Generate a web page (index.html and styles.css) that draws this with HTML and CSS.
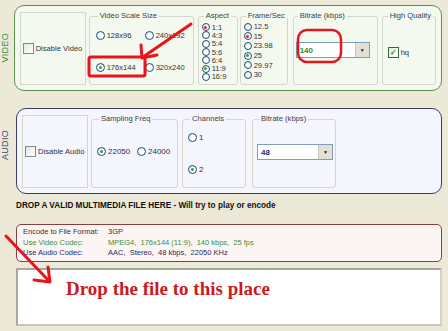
FILE: index.html
```html
<!DOCTYPE html>
<html lang="en">
<head>
    <meta charset="UTF-8">
    <title>Encoder</title>
    <link rel="stylesheet" href="styles.css">
</head>
<body>
    <div class="page">
        <div class="section video">
            <div class="side">VIDEO</div>
            <div class="panel">
                <label class="disable"><span class="check"></span>Disable Video</label>

                <fieldset class="group scale">
                    <legend>Video Scale Size</legend>
                    <div class="grid2">
                        <span class="opt"><span class="radio"></span>128x96</span>
                        <span class="opt"><span class="radio"></span>240x192</span>
                        <span class="opt"><span class="radio on"></span>176x144</span>
                        <span class="opt"><span class="radio"></span>320x240</span>
                    </div>
                </fieldset>

                <fieldset class="group aspect">
                    <legend>Aspect</legend>
                    <div class="list">
                        <span class="opt"><span class="radio small red"></span>1:1</span>
                        <span class="opt"><span class="radio small"></span>4:3</span>
                        <span class="opt"><span class="radio small"></span>5:4</span>
                        <span class="opt"><span class="radio small"></span>5:6</span>
                        <span class="opt"><span class="radio small"></span>6:4</span>
                        <span class="opt"><span class="radio small on"></span>11:9</span>
                        <span class="opt"><span class="radio small"></span>16:9</span>
                    </div>
                </fieldset>

                <fieldset class="group fps">
                    <legend>Frame/Sec</legend>
                    <div class="list">
                        <span class="opt"><span class="radio small"></span>12.5</span>
                        <span class="opt"><span class="radio small red"></span>15</span>
                        <span class="opt"><span class="radio small"></span>23.98</span>
                        <span class="opt"><span class="radio small on"></span>25</span>
                        <span class="opt"><span class="radio small"></span>29.97</span>
                        <span class="opt"><span class="radio small"></span>30</span>
                    </div>
                </fieldset>

                <fieldset class="group vbitrate">
                    <legend>Bitrate (kbps)</legend>
                    <div class="select green"><span class="val">140</span><span class="drop">&#9660;</span></div>
                </fieldset>

                <fieldset class="group hq">
                    <legend>High Quality</legend>
                    <label class="hqbox"><span class="check on">&#10003;</span>hq</label>
                </fieldset>
            </div>
        </div>

        <div class="section audio">
            <div class="side">AUDIO</div>
            <div class="panel">
                <label class="disable"><span class="check"></span>Disable Audio</label>

                <fieldset class="group freq">
                    <legend>Sampling Freq</legend>
                    <div class="row">
                        <span class="opt w40"><span class="radio on"></span>22050</span>
                        <span class="opt"><span class="radio"></span>24000</span>
                    </div>
                </fieldset>

                <fieldset class="group channels">
                    <legend>Channels</legend>
                    <div class="col">
                        <span class="opt"><span class="radio"></span>1</span>
                        <span class="opt"><span class="radio on"></span>2</span>
                    </div>
                </fieldset>

                <fieldset class="group abitrate">
                    <legend>Bitrate (kbps)</legend>
                    <div class="select navy"><span class="val">48</span><span class="drop">&#9660;</span></div>
                </fieldset>
            </div>
        </div>

        <p class="hint">DROP A VALID MULTIMEDIA FILE HERE - Will try to play or encode</p>

        <div class="info">
            <div class="line"><span class="key">Encode to File Format:</span><span>3GP</span></div>
            <div class="line green"><span class="key">Use Video Codec:</span><span>MPEG4, &nbsp;176x144 (11:9), &nbsp;140 kbps, &nbsp;25 fps</span></div>
            <div class="line navy"><span class="key">Use Audio Codec:</span><span>AAC, &nbsp;Stereo, &nbsp;48 kbps, &nbsp;22050 KHz</span></div>
        </div>

        <div class="dropzone">Drop the file to this place</div>
    </div>

    <svg class="marks" width="448" height="331" viewBox="0 0 448 331">
        <g fill="none" stroke="#e8141c" stroke-linecap="round" stroke-linejoin="round">
            <path d="M191 24 L143 57" stroke-width="3"/>
            <path d="M141 45 L142 58 L157 55" stroke-width="3"/>
            <rect x="89" y="57" width="56" height="19" rx="2" stroke-width="3"/>
            <rect x="298" y="30" width="43" height="32" rx="9" stroke-width="2.5"/>
            <path d="M6 236 L49 281" stroke-width="3"/>
            <path d="M48 267 L50 282 L34 280" stroke-width="3"/>
        </g>
    </svg>
</body>
</html>
```

FILE: styles.css
```css
body {
    margin: 0;
    background-color: #ece9d8;
    font-family: "Liberation Sans", Arial, sans-serif;
    font-size: 7.6px;
    color: #333;
    position: relative;
    width: 448px;
    height: 331px;
    overflow: hidden;
}

.page {
    padding: 5px 6px 0 0;
}

.section {
    display: flex;
    align-items: center;
    height: 86px;
}

.section.audio {
    margin-top: 17px;
}

.side {
    width: 16px;
    writing-mode: vertical-rl;
    transform: rotate(180deg);
    text-align: center;
    font-size: 9px;
    letter-spacing: 0.3px;
}

.video .side {
    color: #3f8f3f;
}

.audio .side {
    color: #46466e;
    margin-top: -12px;
}

.panel {
    flex: 1;
    height: 86px;
    box-sizing: border-box;
    display: flex;
    padding: 6px 5px 5px 5px;
    border-radius: 10px;
}

.video .panel {
    border: 1px solid #5c8f4c;
    background-color: #f4f9f0;
}

.audio .panel {
    border: 1px solid #3c3c6c;
    background-color: #f5f5fd;
}

.disable {
    width: 66px;
    box-sizing: border-box;
    border: 1px solid #d8d6c8;
    display: flex;
    align-items: center;
    padding-left: 2px;
    margin-right: 3px;
}

.check {
    width: 9px;
    height: 9px;
    border: 1px solid #7f8a8f;
    background: linear-gradient(135deg, #e6e6e0, #fff);
    margin-right: 2px;
    flex: none;
    display: inline-flex;
    align-items: center;
    justify-content: center;
    font-size: 8px;
    line-height: 1;
}

.check.on {
    border-color: #2d6b3c;
    color: #2a8a2a;
    font-weight: bold;
}

.group {
    margin: 0;
    padding: 0 4px;
    border: 1px solid #d8d6c8;
    border-radius: 3px;
    min-width: 0;
    box-sizing: border-box;
    height: 73px;
}

.group legend {
    padding: 0 2px;
    margin-left: 2px;
    line-height: 8px;
    color: #404040;
    white-space: nowrap;
}

.opt {
    display: flex;
    align-items: center;
    white-space: nowrap;
}

.radio {
    width: 9px;
    height: 9px;
    box-sizing: border-box;
    border: 1px solid #1c5180;
    border-radius: 50%;
    background: radial-gradient(circle at 60% 60%, #fff 30%, #dcdcd4 100%);
    margin-right: 2px;
    flex: none;
    position: relative;
}

.radio.small {
    width: 8px;
    height: 8px;
}

.radio.on::after,
.radio.red::after {
    content: "";
    position: absolute;
    left: 50%;
    top: 50%;
    width: 3px;
    height: 3px;
    margin: -1.5px 0 0 -1.5px;
    border-radius: 50%;
    background-color: #3b9a3b;
}

.radio.red::after {
    background-color: #e02030;
}

.scale {
    width: 105px;
    margin-right: 4px;
    padding-left: 6px;
}

.grid2 {
    display: grid;
    grid-template-columns: 49px auto;
    row-gap: 22px;
    padding-top: 10px;
}

.grid2 .opt {
    height: 10px;
}

.aspect {
    width: 40px;
    margin-right: 2px;
    padding: 0 2px 0 3px;
}

.aspect .list {
    padding-top: 3px;
}

.aspect .opt {
    height: 8.3px;
}

.fps {
    width: 48px;
    margin-right: 5px;
    padding: 0 2px 0 3px;
}

.fps .list {
    padding-top: 2px;
}

.fps .opt {
    height: 9.6px;
}

.vbitrate {
    width: 85px;
    margin-right: 4px;
    padding: 0 2px;
}

.select {
    width: 74px;
    height: 16px;
    box-sizing: border-box;
    border: 1px solid #7f9db9;
    background-color: #fff;
    display: flex;
    align-items: center;
    justify-content: space-between;
    margin-top: 22px;
    font-weight: bold;
    font-size: 8px;
}

.select .val {
    padding-left: 3px;
}

.select .drop {
    width: 13px;
    height: 14px;
    background-color: #e3e0d4;
    border-left: 1px solid #c9c6b8;
    color: #222;
    font-size: 5px;
    display: flex;
    align-items: center;
    justify-content: center;
}

.select.green {
    color: #2f8a2f;
}

.select.navy {
    color: #2a2a78;
    width: 76px;
    margin-top: 21px;
}

.hq {
    flex: 1;
    padding: 0 2px 0 5px;
}

.hq legend {
    margin-left: 0;
}

.hqbox {
    display: flex;
    align-items: center;
    margin-top: 27px;
}

.freq {
    width: 87px;
    margin-right: 4px;
    padding-left: 5px;
}

.row {
    display: flex;
    padding-top: 24px;
    font-size: 8px;
}

.w40 {
    width: 40px;
}

.channels {
    width: 64px;
    margin-right: 6px;
    padding-left: 5px;
}

.col {
    display: flex;
    flex-direction: column;
    gap: 22px;
    padding-top: 9px;
    font-size: 8px;
}

.col .opt {
    height: 10px;
}

.abitrate {
    width: 84px;
    padding-left: 4px;
}

.hint {
    margin: 8px 0 0 16px;
    font-weight: bold;
    font-size: 8.2px;
    line-height: 8px;
    color: #111;
}

.info {
    margin: 14px 0 0 16px;
    height: 38px;
    box-sizing: border-box;
    border: 1.5px solid #8b3e3e;
    border-radius: 5px;
    background-color: #fdf4f4;
    padding: 2px 0 0 6px;
}

.line {
    display: flex;
    line-height: 10.5px;
    font-size: 7.5px;
}

.key {
    width: 85px;
}

.line.green {
    color: #3f8f3f;
}

.line.navy {
    color: #2c2c5c;
}

.dropzone {
    margin: 6px 0 0 16px;
    height: 58px;
    box-sizing: border-box;
    background-color: #fff;
    border: 2px solid;
    border-color: #a8a89a #d6d3c4 #c8c5b6 #a8a89a;
    padding: 8px 0 0 48px;
    font-family: "Liberation Serif", "Times New Roman", serif;
    font-weight: bold;
    font-size: 19px;
    color: #cc1a22;
}

.marks {
    position: absolute;
    left: 0;
    top: 0;
    pointer-events: none;
}
```
